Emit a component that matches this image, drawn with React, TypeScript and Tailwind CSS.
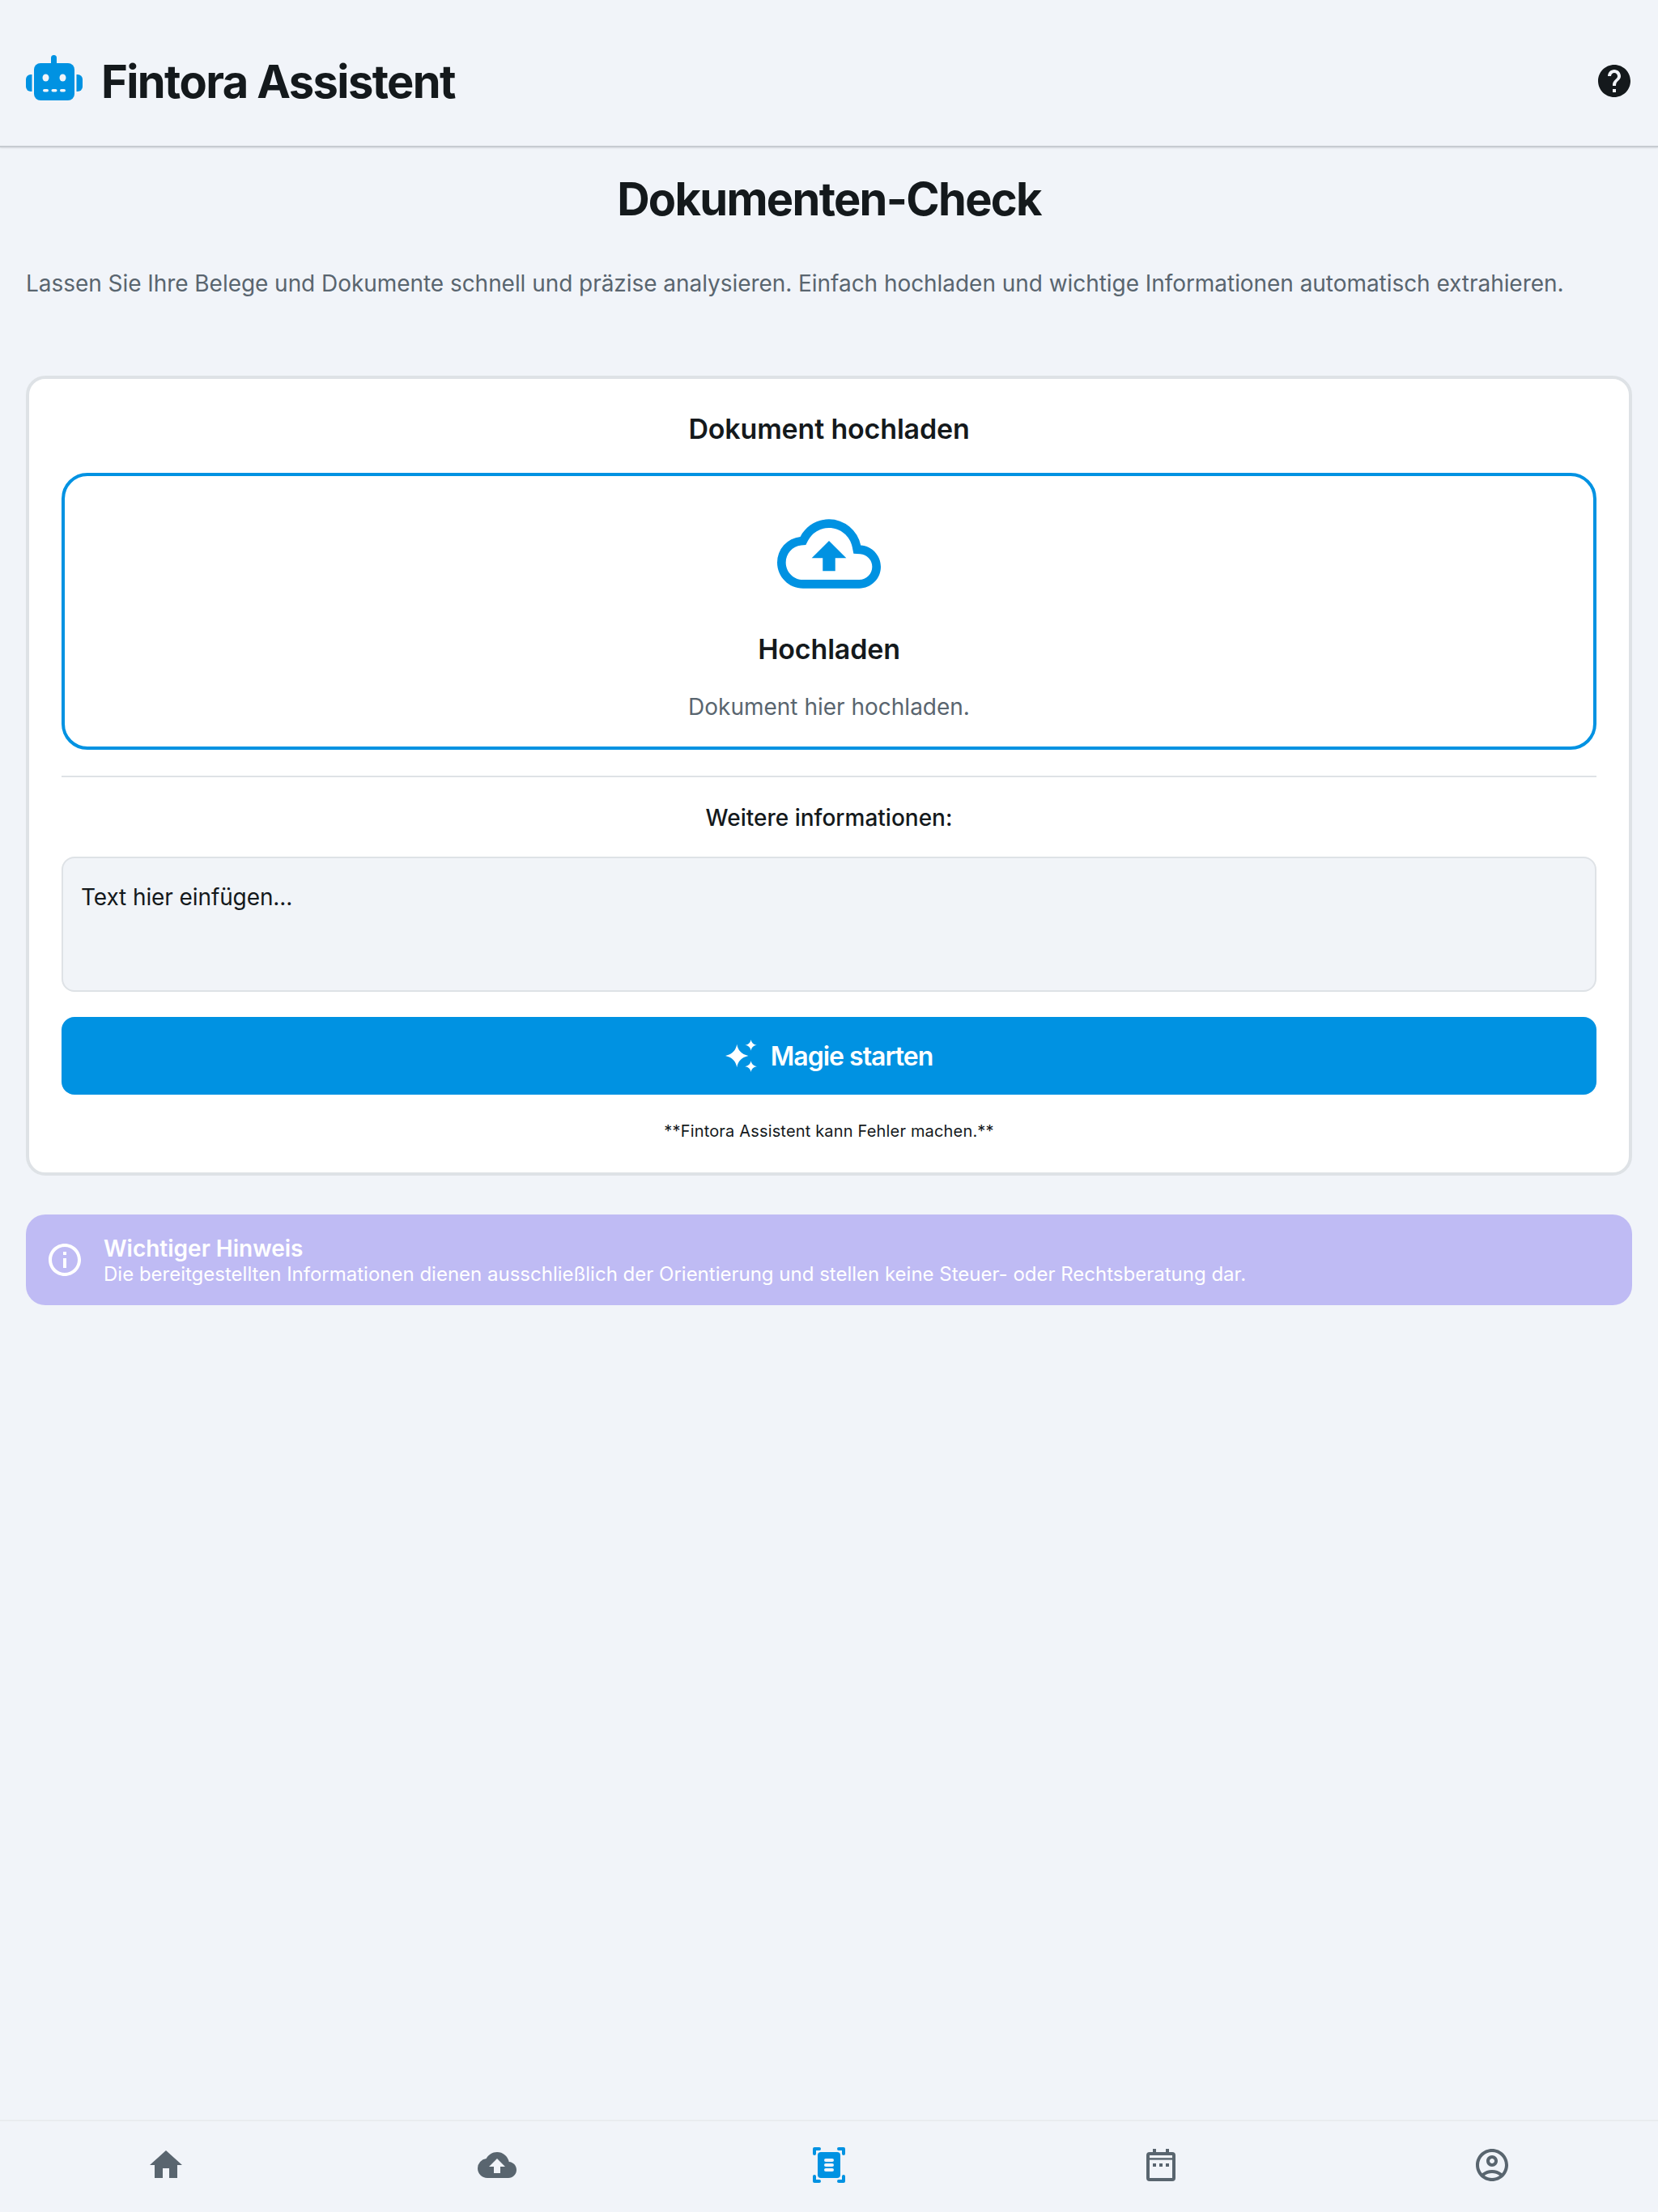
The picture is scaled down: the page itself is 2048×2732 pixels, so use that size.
import {
  MdHelp,
  MdOutlineCloudUpload,
  MdInfoOutline,
  MdHome,
  MdCloudUpload,
  MdOutlineAccountCircle,
} from "react-icons/md";

function RobotIcon() {
  return (
    <svg width="70" height="57" viewBox="0 0 70 57" className="text-[#0092e2] mb-[7px]" fill="currentColor">
      <rect x="31" y="0" width="7" height="14" rx="3.5" />
      <rect x="10" y="10" width="50" height="46" rx="8" />
      <path d="M7.5 24v21H6a6 6 0 0 1-6-6v-9a6 6 0 0 1 6-6z" />
      <path d="M62.5 24v21H64a6 6 0 0 0 6-6v-9a6 6 0 0 0-6-6z" />
      <ellipse cx="24.5" cy="28" rx="4" ry="4.5" fill="#f1f4f9" />
      <ellipse cx="45.5" cy="28" rx="4" ry="4.5" fill="#f1f4f9" />
      <rect x="21" y="42" width="7" height="3.6" rx="1.8" fill="#f1f4f9" />
      <rect x="31.5" y="42" width="7" height="3.6" rx="1.8" fill="#f1f4f9" />
      <rect x="42" y="42" width="7" height="3.6" rx="1.8" fill="#f1f4f9" />
    </svg>
  );
}

function SparkleIcon() {
  return (
    <svg width="39" height="40" viewBox="0 0 37 38" fill="white">
      <path d="M13.500 5.500c1.300 7 5 11.500 13.500 13.500-8.500 2-12.200 6.500-13.500 13.500C12.200 25.500 8.500 21 0 19c8.500-2 12.200-6.500 13.500-13.500z" />
      <path d="M30 0c.7 3.500 2.600 5.800 7 6.500-4.400.7-6.300 3-7 6.500-.7-3.500-2.600-5.800-7-6.500 4.400-.7 6.300-3 7-6.500z" />
      <path d="M30 25c.7 3.500 2.600 5.800 7 6.500-4.400.7-6.300 3-7 6.500-.7-3.500-2.600-5.800-7-6.500 4.400-.7 6.300-3 7-6.500z" />
    </svg>
  );
}

function ScannerIcon() {
  return (
    <svg width="48" height="48" viewBox="0 0 24 24" className="text-[#0092e2]">
      <g fill="none" stroke="currentColor" strokeWidth="2" strokeLinecap="round" strokeLinejoin="round">
        <path d="M3 5V2h3" />
        <path d="M18 2h3v3" />
        <path d="M3 19v3h3" />
        <path d="M18 22h3v-3" />
      </g>
      <rect x="5" y="4" width="14" height="16" rx="2" fill="currentColor" />
      <rect x="9" y="8" width="6" height="2" rx="1" fill="#f1f4f9" />
      <rect x="9" y="11" width="6" height="2" rx="1" fill="#f1f4f9" />
      <rect x="9" y="14" width="6" height="2" rx="1" fill="#f1f4f9" />
    </svg>
  );
}

function CalendarIcon() {
  return (
    <svg width="48" height="48" viewBox="0 0 24 24" fill="currentColor">
      <rect x="4" y="5" width="16" height="16" rx="1" fill="none" stroke="currentColor" strokeWidth="2" />
      <rect x="7" y="2" width="2" height="3" />
      <rect x="15" y="2" width="2" height="3" />
      <rect x="4" y="7.600" width="16" height="1.200" />
      <rect x="7" y="11" width="2" height="2" />
      <rect x="11" y="11" width="2" height="2" />
      <rect x="15" y="11" width="2" height="2" />
    </svg>
  );
}

export default function App() {
  return (
    <div className="min-h-screen flex flex-col bg-[#f1f4f9] text-[#14191c] font-['Inter',sans-serif]">
      <header className="h-[182px] shrink-0 flex items-center justify-between pl-8 pr-[30px] pt-[19px] border-b-2 border-[#c6cbd1] shadow-[0_1px_2px_rgba(0,0,0,0.1)]">
        <div className="flex items-center gap-[23px]">
          <RobotIcon />
          <h2 className="text-[56px] leading-[68px] font-bold tracking-[-1.6px] pt-0.5">Fintora Assistent</h2>
        </div>
        <MdHelp size={48} />
      </header>

      <main className="flex-1 px-8 pt-[30px]">
        <h1 className="text-center text-[56px] leading-[68px] font-bold tracking-[-1.7px]">Dokumenten-Check</h1>
        <p className="mt-12 text-[28px] leading-[44px] tracking-[-0.05px] text-[#59656f]">
          Lassen Sie Ihre Belege und Dokumente schnell und präzise analysieren. Einfach hochladen und wichtige Informationen automatisch extrahieren.
        </p>

        <section className="mt-[92px] bg-white border-4 border-[#dee2e6] rounded-3xl px-10 pt-10 pb-[37px]">
          <h3 className="text-center text-[34px] leading-[44px] font-semibold tracking-[-0.17px]">Dokument hochladen</h3>

          <div className="mt-8 border-4 border-[#0092e2] rounded-[32px] pt-8 pb-[29px] flex flex-col items-center">
            <MdOutlineCloudUpload size={128} className="text-[#0092e2]" />
            <div className="mt-8 text-[34px] leading-[44px] font-semibold tracking-[-0.17px]">Hochladen</div>
            <div className="mt-[29px] text-[28px] leading-[40px] text-[#59656f]">Dokument hier hochladen.</div>
          </div>

          <div className="mt-8 h-0.5 bg-[#dee2e6]" />

          <div className="mt-[30px] text-center text-[28px] leading-[40px] font-medium">Weitere informationen:</div>

          <div className="mt-7 h-[167px] bg-[#f1f4f8] border-2 border-[#dee2e6] rounded-2xl px-[22px] pt-[28px] text-[28px] leading-[40px] tracking-[-0.1px]">
            Text hier einfügen...
          </div>

          <button className="mt-[31px] w-full h-24 bg-[#0092e2] rounded-2xl flex items-center justify-center gap-[17px] text-white text-[32px] font-semibold tracking-[-1px]">
            <SparkleIcon />
            <span className="pt-0.5">Magie starten</span>
          </button>

          <p className="mt-[31px] text-center text-[20px] leading-7 tracking-[0.17px]">**Fintora Assistent kann Fehler machen.**</p>
        </section>

        <section className="mt-12 h-[112px] bg-[#bfbbf4] text-white rounded-3xl pl-6 pr-6 flex items-center gap-6">
          <MdInfoOutline size={48} />
          <div className="pt-[3px]">
            <div className="text-[28px] leading-8 font-semibold">Wichtiger Hinweis</div>
            <div className="text-[24px] leading-8">
              Die bereitgestellten Informationen dienen ausschließlich der Orientierung und stellen keine Steuer- oder Rechtsberatung dar.
            </div>
          </div>
        </section>
      </main>

      <nav className="h-[114px] shrink-0 grid grid-cols-5 border-t-2 border-[#e9ecef] pb-1 text-[#59656f]">
        <div className="flex items-center justify-center"><MdHome size={48} /></div>
        <div className="flex items-center justify-center"><MdCloudUpload size={48} /></div>
        <div className="flex items-center justify-center"><ScannerIcon /></div>
        <div className="flex items-center justify-center"><CalendarIcon /></div>
        <div className="flex items-center justify-center"><MdOutlineAccountCircle size={48} /></div>
      </nav>
    </div>
  );
}
